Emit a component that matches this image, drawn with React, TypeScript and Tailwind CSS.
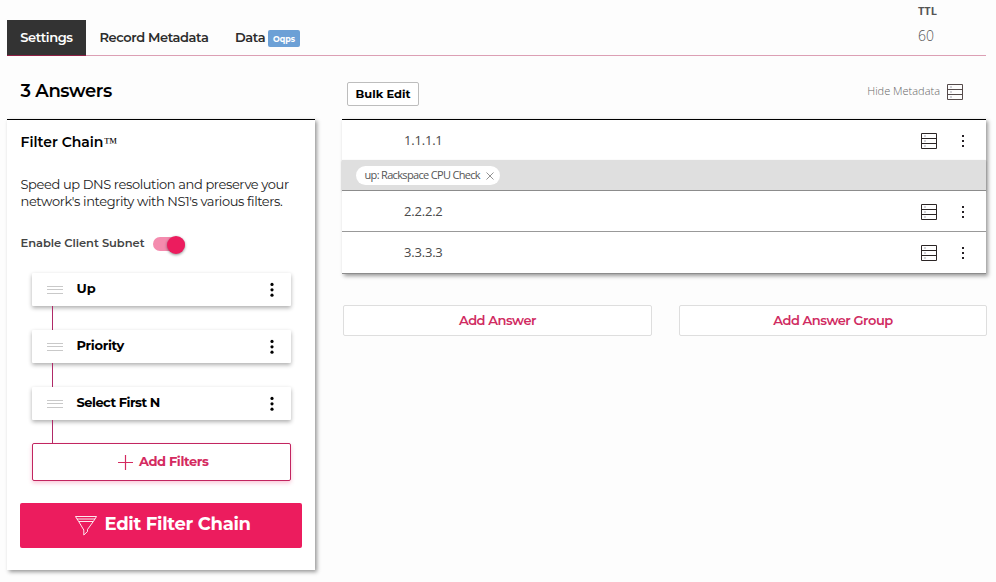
import React from "react";

const MONT = "font-['Montserrat',Inter,sans-serif]";
const OPEN = "font-['Open_Sans',sans-serif]";

function ServerIcon({ className = "" }: { className?: string }) {
  return (
    <svg className={`block shrink-0 ${className}`} width="16" height="16" viewBox="0 0 16 16" fill="none" stroke="currentColor">
      <path d="M0.5 0.5H15.5V15.5H0.5Z M0.5 5.5H15.5 M0.5 10.5H15.5" />
      <path d="M3 3h2M3 8h2M3 13h2" stroke="#a9a9b4" />
    </svg>
  );
}

function Dots({ big = false }: { big?: boolean }) {
  return big ? (
    <svg className="block" width="4" height="16" viewBox="0 0 4 16">
      <circle cx="2" cy="2.4" r="1.6" />
      <circle cx="2" cy="7.8" r="1.6" />
      <circle cx="2" cy="13.2" r="1.6" />
    </svg>
  ) : (
    <svg className="block" width="2" height="12" viewBox="0 0 2 12" fill="#252025">
      <path d="M0 0h2v2H0zM0 5h2v2H0zM0 10h2v2H0z" />
    </svg>
  );
}

function FilterItem({ name, tracking }: { name: string; tracking: string }) {
  return (
    <>
      <div className="flex h-[33px] items-center rounded-[1px] bg-white pl-[15px] pr-[17px] shadow-[0_2px_4px_rgba(0,0,0,0.32)]">
        <svg className="block" width="16" height="9" viewBox="0 0 16 9" stroke="#c9c9c9">
          <path d="M0 1.5H16M0 4.5H16M0 8.5H16" />
        </svg>
        <span className={`ml-[13.5px] flex-1 whitespace-nowrap pb-[3px] text-[13px] font-bold leading-4 ${tracking}`}>{name}</span>
        <Dots big />
      </div>
      <div className="ml-5 h-6 w-px bg-[#b02a68]" />
    </>
  );
}

function AnswerRow({ ip, height }: { ip: string; height: string }) {
  return (
    <div className={`flex items-center bg-white pl-[62px] pr-[22px] text-[#4a4a4a] ${height}`}>
      <span className={`flex-1 text-[13px] leading-4 tracking-[-0.2px] ${OPEN}`}>{ip}</span>
      <ServerIcon className="mt-[2px] text-[#2b2525]" />
      <div className="ml-[25px] mt-[2px]"><Dots /></div>
    </div>
  );
}

export default function App() {
  return (
    <div className={`h-[582px] w-[996px] overflow-hidden bg-[#fdfdfd] text-black ${MONT}`}>
      <header className="ml-[7px] flex h-14 w-[979px] items-end border-b border-b-[#dc9fb4] text-[13px] font-semibold leading-4 tracking-[-0.4px] text-[#2c2c2c]">
        <div className="relative -mb-px flex h-9 w-[79px] items-center justify-center border-b border-b-[#8f2045] bg-[#333] pb-px text-white">Settings</div>
        <div className="ml-[13.5px] flex h-9 w-[109.5px] items-center whitespace-nowrap">Record Metadata</div>
        <div className="ml-[26px] flex h-9 items-center">
          <span className="w-[33px]">Data</span>
          <span className="mt-[2px] flex h-[17px] w-8 items-center justify-center rounded-[2px] bg-[#6ca0d6] pt-px text-[8px] font-bold tracking-normal text-white">Oqps</span>
        </div>
        <div className={`ml-auto h-14 w-[68px] tracking-normal text-[#555] ${OPEN}`}>
          <div className="pt-[4px] text-[11px] font-bold leading-4">TTL</div>
          <div className="pt-[7px] text-[14px] font-light leading-5">60</div>
        </div>
      </header>

      <main className="flex gap-[27px] pl-[7px]">
        <section className="w-[308px]">
          <h1 className="h-[63px] pl-[13.5px] pt-[23px] text-[18px] font-semibold leading-6 tracking-[-0.35px]">3 Answers</h1>
          <div className="h-[451px] border-t border-black bg-white shadow-[2px_2px_4px_rgba(0,0,0,0.4)]">
            <h2 className="h-[31px] pl-[13.5px] pt-[13px] text-[14px] font-semibold leading-[18px]">
              Filter Chain<span className="font-['Liberation_Serif',serif] font-normal">™</span>
            </h2>
            <p className="whitespace-nowrap pl-[13.5px] pt-[25px] text-[13px] leading-[17px] tracking-[-0.39px] text-[#222]">
              Speed up DNS resolution and preserve your<br />network's integrity with NS1's various filters.
            </p>
            <div className="flex h-[63px] items-start pl-[13.5px] pt-[25px]">
              <span className="w-[132.5px] whitespace-nowrap text-[11.5px] font-semibold leading-4 tracking-[-0.05px] text-[#444]">Enable Client Subnet</span>
              <div className="mt-[2px] flex h-[14px] w-8 items-center justify-end rounded-full bg-[#f48bae]">
                <div className="mt-[2px] h-[18px] w-[18px] shrink-0 rounded-full bg-[#ec1c5e] shadow-[0_1px_3px_rgba(0,0,0,0.45)]" />
              </div>
            </div>
            <div className="ml-[25px] w-[259px]">
              <FilterItem name="Up" tracking="tracking-normal" />
              <FilterItem name="Priority" tracking="tracking-[-0.3px]" />
              <FilterItem name="Select First N" tracking="tracking-[-0.5px]" />
              <button className="-mt-px flex h-[38px] w-full items-center rounded-[2px] border border-[#c22560] bg-white pl-[85px] text-[13px] font-bold leading-4 tracking-[-0.4px] text-[#d42a60] shadow-[0_2px_4px_rgba(236,28,94,0.25)]">
                <svg className="mr-[6px] block" width="15" height="15" viewBox="0 0 15 15" stroke="currentColor" strokeWidth="1.2"><path d="M7.5 0V15M0 7.5H15" /></svg>
                <span className="pb-[3px]">Add Filters</span>
              </button>
            </div>
            <button className="ml-[13px] mt-[22px] flex h-[45px] w-[282px] items-center rounded-[2px] bg-[#ec1c5e] pl-[55px] text-[18px] font-bold leading-6 tracking-[-0.3px] text-white">
              <svg className="mr-[7.5px] block" width="22" height="20" viewBox="0 0 22 20" fill="none" stroke="currentColor" strokeWidth="0.9" strokeLinejoin="round">
                <path d="M0.5 0.5H21.5L20 3H2ZM2 3L3.7 5.5H18.3L20 3M3.7 5.5L8.8 14V19L12.5 15.5V13.5L18.3 5.5" />
              </svg>
              <span className="pb-[3px]">Edit Filter Chain</span>
            </button>
          </div>
        </section>

        <section className="w-[645px]">
          <div className="flex h-[63px] items-start pl-[5px]">
            <button className="mt-[26px] flex h-6 w-[72px] items-center justify-center rounded-[2px] border border-[#bdbdbd] bg-white text-[11.5px] font-bold leading-4">Bulk Edit</button>
            <div className={`ml-auto flex items-start pr-[24px] pt-[27px] text-[#666] ${OPEN}`}>
              <span className="mr-[7px] text-[11px] font-light leading-4">Hide Metadata</span>
              <ServerIcon className="mt-px text-[#554b4b]" />
            </div>
          </div>
          <div className="w-[644px] border-b border-t border-b-[#8c8c8c] border-t-black shadow-[2px_2px_4px_rgba(0,0,0,0.4)]">
            <AnswerRow ip="1.1.1.1" height="h-10" />
            <div className="flex h-[31px] items-center border-b border-[#8c8c8c] bg-[#dfdfdf] pl-[14px] shadow-[0_1px_2px_rgba(0,0,0,0.25)]">
              <div className={`flex h-[19px] w-36 items-center rounded-full bg-white pl-[8.5px] text-[11px] tracking-[-0.67px] text-[#555] ${OPEN}`}>
                <span className="w-[121.5px] whitespace-nowrap">up: Rackspace CPU Check</span>
                <svg className="mt-px block" width="8" height="8" viewBox="0 0 8 8" stroke="#777" strokeWidth="0.8"><path d="M0.5 0.5L7.5 7.5M7.5 0.5L0.5 7.5" /></svg>
              </div>
            </div>
            <AnswerRow ip="2.2.2.2" height="h-10" />
            <div className="h-px bg-[#999]" />
            <AnswerRow ip="3.3.3.3" height="h-10" />
            <div className="h-px bg-white" />
          </div>
          <div className="ml-px mt-[31px] flex gap-[27px] text-[13px] font-semibold leading-4 tracking-[-0.45px] text-[#d02b62]">
            <button className="h-[31px] w-[309px] rounded-[2px] border border-[#dedede] bg-white pb-[2px]">Add Answer</button>
            <button className="h-[31px] w-[308px] rounded-[2px] border border-[#dedede] bg-white pb-[2px]">Add Answer Group</button>
          </div>
        </section>
      </main>
    </div>
  );
}
